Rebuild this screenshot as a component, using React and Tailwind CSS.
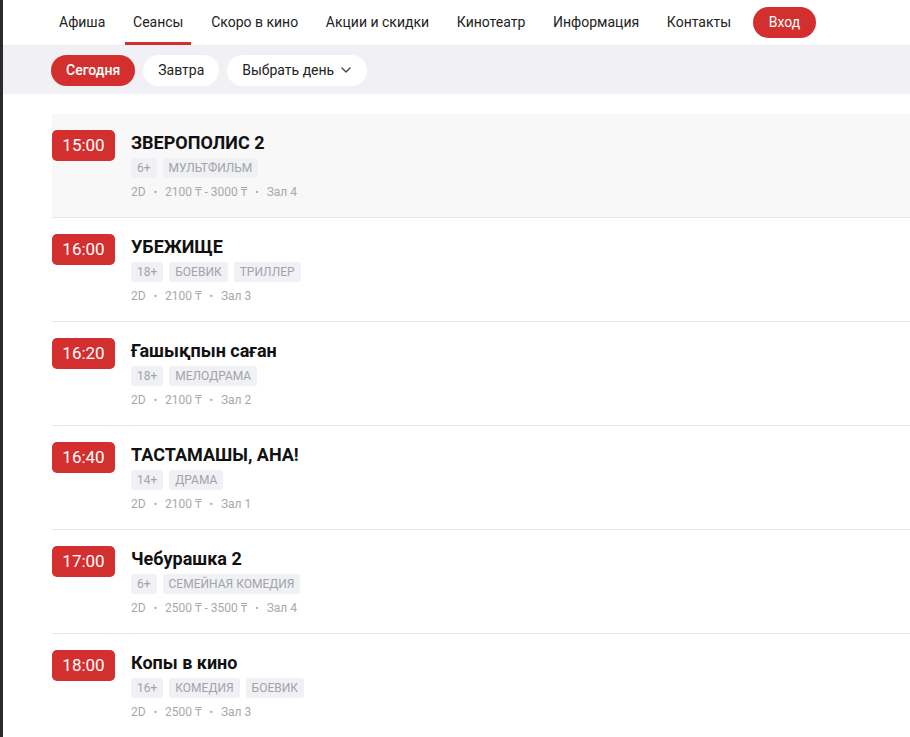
import React from "react";
import { ChevronDown } from "lucide-react";

const nav = ["Афиша", "Сеансы", "Скоро в кино", "Акции и скидки", "Кинотеатр", "Информация", "Контакты"];

const sessions = [
  { time: "15:00", title: "ЗВЕРОПОЛИС 2", tags: ["6+", "МУЛЬТФИЛЬМ"], price: "2100 ₸ - 3000 ₸", hall: "Зал 4", active: true },
  { time: "16:00", title: "УБЕЖИЩЕ", tags: ["18+", "БОЕВИК", "ТРИЛЛЕР"], price: "2100 ₸", hall: "Зал 3" },
  { time: "16:20", title: "Ғашықпын саған", tags: ["18+", "МЕЛОДРАМА"], price: "2100 ₸", hall: "Зал 2" },
  { time: "16:40", title: "ТАСТАМАШЫ, АНА!", tags: ["14+", "ДРАМА"], price: "2100 ₸", hall: "Зал 1" },
  { time: "17:00", title: "Чебурашка 2", tags: ["6+", "СЕМЕЙНАЯ КОМЕДИЯ"], price: "2500 ₸ - 3500 ₸", hall: "Зал 4" },
  { time: "18:00", title: "Копы в кино", tags: ["16+", "КОМЕДИЯ", "БОЕВИК"], price: "2500 ₸", hall: "Зал 3" },
];

function Dot() {
  return <span className="mx-[8px] text-[10px] text-[#a8a8a8]">•</span>;
}

export default function App() {
  return (
    <div
      className="min-h-[737px] bg-white border-l-[3px] border-[#2b2b2b] overflow-hidden"
      style={{ fontFamily: "Roboto, 'Noto Sans', 'DejaVu Sans', sans-serif" }}
    >
      <header className="h-[46px] border-b border-[#ececf0] bg-white">
        <nav className="flex items-center h-[45px] pl-[48px] gap-[11.7px]">
          {nav.map((n) => (
            <a
              key={n}
              className={
                "relative h-full flex items-center px-2 text-[14px] text-[#222] " +
                (n === "Сеансы" ? "after:absolute after:left-0 after:right-0 after:bottom-0 after:h-[3px] after:bg-[#d32f2f]" : "")
              }
            >
              {n}
            </a>
          ))}
          <button className="ml-[2px] h-[31px] px-[16px] rounded-full bg-[#d32f2f] text-white text-[14px]">
            Вход
          </button>
        </nav>
      </header>

      <div className="h-[48px] bg-[#f1f1f5] flex items-center pl-[48px] gap-2">
        <button className="h-[31px] px-[15px] rounded-full bg-[#d32f2f] text-white text-[14px] font-medium">Сегодня</button>
        <button className="h-[31px] px-[15px] rounded-full bg-white text-[#222] text-[14px]">Завтра</button>
        <button className="h-[31px] pl-[15px] pr-[13px] rounded-full bg-white text-[#222] text-[14px] flex items-center gap-1">
          Выбрать день
          <ChevronDown size={16} strokeWidth={2} className="text-[#444]" />
        </button>
      </div>

      <div className="pt-[20px] pl-[49px]">
        {sessions.map((s) => (
          <div
            key={s.time}
            className={
              "flex gap-4 pt-4 pb-[17px] border-b border-[#e6e6ea] " + (s.active ? "bg-[#f8f8f9]" : "")
            }
          >
            <div className="w-[63px] h-[31px] shrink-0 rounded-[5px] bg-[#d32f2f] text-white text-[17px] flex items-center justify-center">
              {s.time}
            </div>
            <div className="flex flex-col">
              <div className="text-[18px] leading-[26px] font-bold text-[#111]">{s.title}</div>
              <div className="mt-[2px] flex gap-[6px]">
                {s.tags.map((t) => (
                  <span key={t} className="h-[20px] px-[6px] rounded-[3px] bg-[#f0f1f4] text-[12px] leading-[20px] text-[#a3a3a7]">
                    {t}
                  </span>
                ))}
              </div>
              <div className="mt-[6px] h-[16px] flex items-center text-[12px] text-[#a8a8ab]">
                <span>2D</span>
                <Dot />
                <span>{s.price}</span>
                <Dot />
                <span>{s.hall}</span>
              </div>
            </div>
          </div>
        ))}
      </div>
    </div>
  );
}
